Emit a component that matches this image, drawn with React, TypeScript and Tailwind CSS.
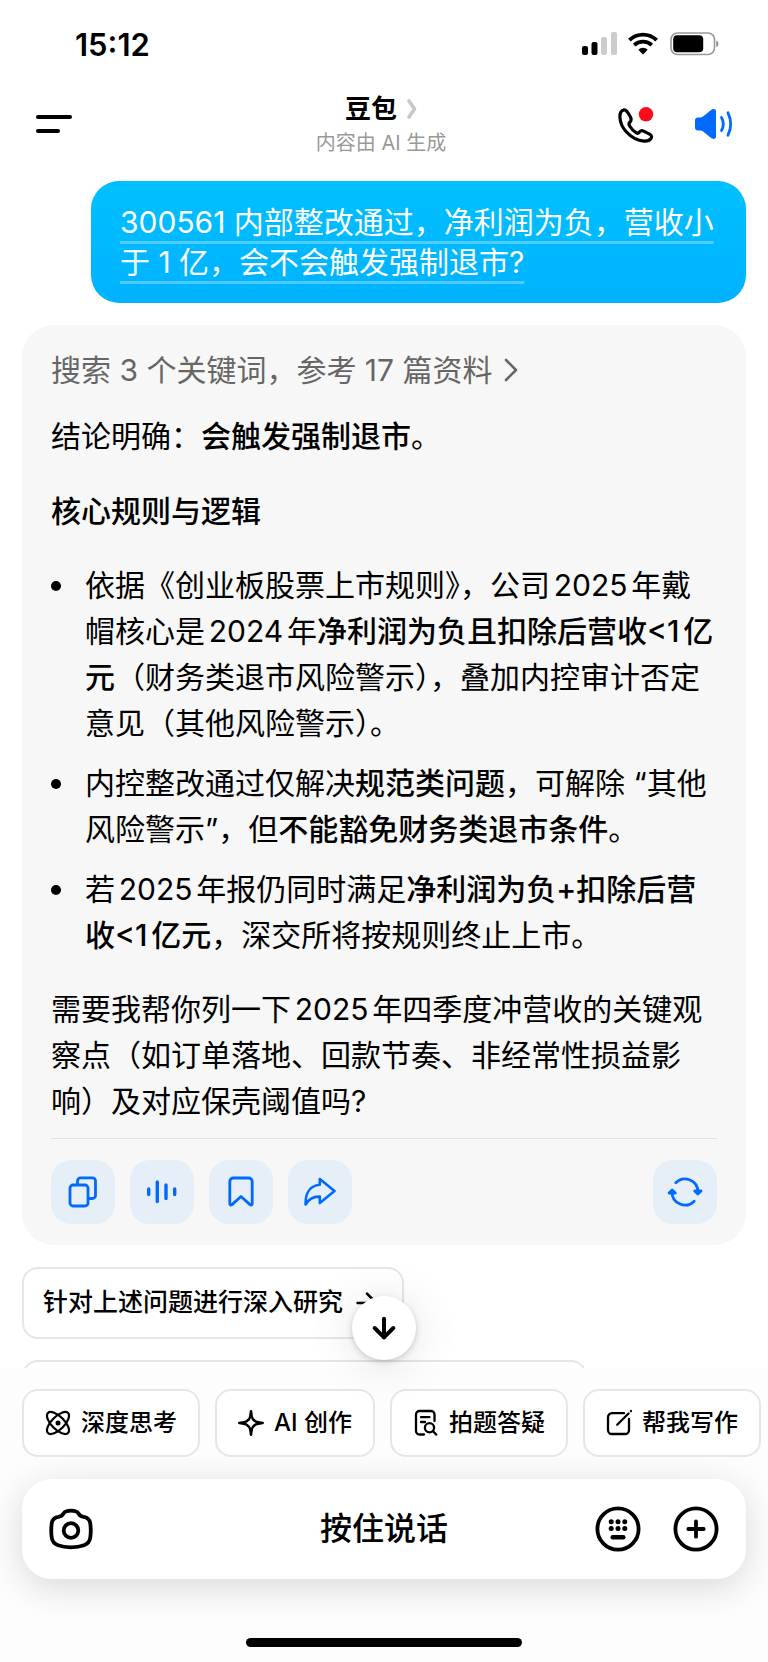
import React from "react";
import { ArrowDown, ArrowRight } from "lucide-react";

interface IconProps {
  className?: string;
}

const SignalIcon: React.FC<IconProps> = ({ className }) => (
  <svg viewBox="0 0 36 24" className={className} aria-hidden="true">
    <rect x="0" y="14" width="6" height="9" rx="2" />
    <rect x="9.5" y="10" width="6" height="13" rx="2" />
    <rect x="19" y="5" width="6" height="18" rx="2" fill="#ccc" />
    <rect x="29" y="0" width="6" height="23" rx="2" fill="#ccc" />
  </svg>
);

const WifiIcon: React.FC<IconProps> = ({ className }) => (
  <svg viewBox="0 0 30 24" className={className} aria-hidden="true">
    <g fill="none" stroke="currentColor" strokeWidth="3.8">
      <path d="M1.4 8.2 A19.5 19.5 0 0 1 28.6 8.2" />
      <path d="M6.2 13.2 A12.5 12.5 0 0 1 23.8 13.2" />
    </g>
    <path d="M15 22.6 L10.3 17.8 A6.7 6.7 0 0 1 19.7 17.8 Z" />
  </svg>
);

const BatteryIcon: React.FC<IconProps> = ({ className }) => (
  <svg viewBox="0 0 50 24" className={className} aria-hidden="true">
    <rect x="1" y="1" width="43.5" height="21.5" rx="6.5" fill="none" stroke="#999" strokeWidth="1.6" />
    <rect x="3.2" y="3.2" width="30" height="17" rx="4" />
    <path d="M46.3 8.5 C49 9.5 49 14 46.3 15 Z" fill="#888" />
  </svg>
);

const PhoneIcon: React.FC<IconProps> = ({ className }) => (
  <svg viewBox="0 0 38 38" className={className} fill="none" stroke="currentColor" strokeWidth="3.2" strokeLinejoin="round" aria-hidden="true">
    <path d="M4 13 C3.5 8 5.5 5 8 4.8 C10.5 4.6 11.5 7 14.2 11.5 C15.6 14 15.8 15.5 13.8 17.3 C12.6 18.4 12.8 19.6 13.6 21 C15.3 23.8 17.6 26.2 20.3 27.8 C21.5 28.5 22.4 28.4 23.1 27.4 C24.4 25.4 25.6 25.1 27.6 26.1 L33.6 29.2 C35.8 30.5 36 32 35 33.5 C33.5 35.5 31 36.3 28 36.1 C22 35.7 15 32 10 26.5 C6 22 4.3 17 4 13 Z" />
    <circle cx="30" cy="9.3" r="7.2" fill="#ff0a1a" stroke="none" />
  </svg>
);

const SpeakerIcon: React.FC<IconProps> = ({ className }) => (
  <svg viewBox="0 0 40 36" className={className} aria-hidden="true">
    <path fill="currentColor" d="M1 14.5 C1 12.5 2 11.6 4 11.5 L6.5 11.4 C8 11.3 9 10.7 10 9.8 L16.5 4.4 C19 2.4 22 2.6 22 5.5 V30.5 C22 33.4 19 33.6 16.5 31.6 L10 26.2 C9 25.3 8 24.7 6.5 24.6 L4 24.5 C2 24.4 1 23.5 1 21.5 Z" />
    <g fill="none" stroke="currentColor" strokeWidth="2.8" strokeLinecap="round">
      <path d="M27.5 11.5 Q31.2 18 27.5 24.5" />
      <path d="M34 6.8 Q39.4 18 34 29.2" />
    </g>
  </svg>
);

const CopyIcon: React.FC<IconProps> = ({ className }) => (
  <svg viewBox="0 0 32 32" className={className} fill="none" stroke="currentColor" strokeWidth="2.8" strokeLinejoin="round" aria-hidden="true">
    <rect x="3" y="9" width="18" height="21" rx="3" />
    <path d="M10.5 9 V4.8 a3 3 0 0 1 3-3 H25.5 a3 3 0 0 1 3 3 V19.5 a3 3 0 0 1-3 3 H21" />
  </svg>
);

const VoiceIcon: React.FC<IconProps> = ({ className }) => (
  <svg viewBox="0 0 32 32" className={className} fill="none" stroke="currentColor" strokeWidth="3.4" strokeLinecap="round" aria-hidden="true">
    <path d="M2.7 13 V18.5 M11.3 6 V25.5 M20 9 V22.5 M28.7 13 V18.5" />
  </svg>
);

const BookmarkIcon: React.FC<IconProps> = ({ className }) => (
  <svg viewBox="0 0 32 32" className={className} fill="none" stroke="currentColor" strokeWidth="2.8" strokeLinejoin="round" aria-hidden="true">
    <path d="M4.8 28 V5.5 a3.5 3.5 0 0 1 3.5-3.5 H23.7 a3.5 3.5 0 0 1 3.5 3.5 V28 q-.6 1.8-2.2.6 L16 20.5 L7 28.6 q-1.6 1.2-2.2-.6 Z" />
  </svg>
);

const ShareIcon: React.FC<IconProps> = ({ className }) => (
  <svg viewBox="0 0 32 32" className={className} fill="none" stroke="currentColor" strokeWidth="2.6" strokeLinejoin="round" aria-hidden="true">
    <path d="M15.8 8.8 V3 L30.5 15 L15.8 27 V20.6 C9.5 20.3 5 22.5 1.6 28.5 C1.2 17 6 9.6 15.8 8.8 Z" />
  </svg>
);

const RefreshIcon: React.FC<IconProps> = ({ className }) => (
  <svg viewBox="0 0 36 36" className={className} fill="none" stroke="currentColor" strokeWidth="2.8" strokeLinecap="round" strokeLinejoin="round" aria-hidden="true">
    <path d="M8.8 8.8 A13 13 0 0 1 31 18" />
    <path d="M27.7 17 L34 17 L30.9 20 Z" fill="currentColor" />
    <path d="M27.2 27.2 A13 13 0 0 1 5 18" />
    <path d="M2.1 19 L8.3 19 L5.2 16 Z" fill="currentColor" />
  </svg>
);

const AtomIcon: React.FC<IconProps> = ({ className }) => (
  <svg viewBox="0 0 26 26" className={className} fill="none" stroke="currentColor" strokeWidth="2.2" aria-hidden="true">
    <ellipse cx="13" cy="13" rx="14.2" ry="6.4" transform="rotate(45 13 13)" />
    <ellipse cx="13" cy="13" rx="14.2" ry="6.4" transform="rotate(-45 13 13)" />
    <circle cx="13" cy="13" r="2.5" fill="currentColor" stroke="none" />
  </svg>
);

const SparkleIcon: React.FC<IconProps> = ({ className }) => (
  <svg viewBox="0 0 26 26" className={className} fill="none" stroke="currentColor" strokeWidth="2.6" strokeLinejoin="round" aria-hidden="true">
    <path d="M13 1.3 C13.6 7.6 14.6 9.6 16 10 C16.6 11.4 18.4 12.4 24.7 13 C18.4 13.6 16.6 14.6 16 16 C14.6 16.4 13.6 18.4 13 24.7 C12.4 18.4 11.4 16.4 10 16 C9.4 14.6 7.6 13.6 1.3 13 C7.6 12.4 9.4 11.4 10 10 C11.4 9.6 12.4 7.6 13 1.3 Z" />
  </svg>
);

const DocSearchIcon: React.FC<IconProps> = ({ className }) => (
  <svg viewBox="0 0 26 26" className={className} fill="none" stroke="currentColor" strokeWidth="2.3" strokeLinecap="round" aria-hidden="true">
    <path d="M11 24.5 H6.5 a3.5 3.5 0 0 1-3.5-3.5 V4.5 a3.5 3.5 0 0 1 3.5-3.5 H18 a3.5 3.5 0 0 1 3.5 3.5 V11" />
    <path d="M8 7.2 H16.5 M8 12 H12" />
    <circle cx="16.5" cy="17.8" r="4.6" />
    <path d="M20 21.3 L23.3 24.6" />
  </svg>
);

const ComposeIcon: React.FC<IconProps> = ({ className }) => (
  <svg viewBox="0 0 26 26" className={className} fill="none" stroke="currentColor" strokeWidth="2.3" strokeLinecap="round" aria-hidden="true">
    <path d="M18 3.2 H6 a4 4 0 0 0-4 4 V20 a4 4 0 0 0 4 4 H19 a4 4 0 0 0 4-4 V9" />
    <path d="M11.2 14.8 L22.5 3.5" />
    <path d="M24.9 1.1 L25 1" />
  </svg>
);

const CameraIcon: React.FC<IconProps> = ({ className }) => (
  <svg viewBox="0 0 44 42" className={className} fill="none" stroke="currentColor" strokeWidth="3.8" strokeLinejoin="round" aria-hidden="true">
    <path d="M14.5 5.5 C16 3.2 18 2.7 22 2.7 C26 2.7 28 3.2 29.5 5.5 C31 8 32 8.5 34.5 8.8 C39 9.4 40.6 11.5 41.2 15 C41.9 19.5 41.9 25.5 41.2 30 C40.6 33.6 39 35.8 35 37.3 C31 38.8 27 39.3 22 39.3 C17 39.3 13 38.8 9 37.3 C5 35.8 3.4 33.6 2.8 30 C2.1 25.5 2.1 19.5 2.8 15 C3.4 11.5 5 9.4 9.5 8.8 C12 8.5 13 8 14.5 5.5 Z" />
    <circle cx="22" cy="22.5" r="7.3" />
  </svg>
);

const KeyboardIcon: React.FC<IconProps> = ({ className }) => (
  <svg viewBox="0 0 46 46" className={className} aria-hidden="true">
    <circle cx="23" cy="23" r="20.6" fill="none" stroke="currentColor" strokeWidth="3.8" />
    {[16.2, 23, 29.8].map((x) => (
      <g key={x}>
        <circle cx={x} cy="15.8" r="2.5" />
        <circle cx={x} cy="22.6" r="2.5" />
      </g>
    ))}
    <rect x="15.5" y="29" width="15" height="4.4" rx="2.2" />
  </svg>
);

const PlusIcon: React.FC<IconProps> = ({ className }) => (
  <svg viewBox="0 0 46 46" className={className} fill="none" stroke="currentColor" strokeWidth="3.8" strokeLinecap="round" aria-hidden="true">
    <circle cx="23" cy="23" r="20.6" />
    <path d="M23 15.3 V30.7 M15.3 23 H30.7" />
  </svg>
);

const actions = [
  { label: "复制", Icon: CopyIcon },
  { label: "朗读", Icon: VoiceIcon },
  { label: "收藏", Icon: BookmarkIcon },
  { label: "分享", Icon: ShareIcon },
];

const tools = [
  { label: "深度思考", Icon: AtomIcon },
  { label: "AI 创作", Icon: SparkleIcon },
  { label: "拍题答疑", Icon: DocSearchIcon },
  { label: "帮我写作", Icon: ComposeIcon },
];

const StatusBar: React.FC = () => (
  <div className="flex h-[88px] shrink-0 items-center justify-between pr-12 pl-[75px]">
    <span className="text-[31px] leading-none font-semibold">15:12</span>
    <div className="flex items-center">
      <SignalIcon className="h-6 w-9" />
      <WifiIcon className="ml-[10px] h-6 w-[30px]" />
      <BatteryIcon className="ml-3 h-6 w-[50px]" />
    </div>
  </div>
);

const Header: React.FC = () => (
  <header className="grid shrink-0 grid-cols-[1fr_auto_1fr] items-center pt-[3px] pr-[34px] pb-6 pl-9">
    <button type="button" aria-label="菜单" className="flex flex-col gap-[10px] justify-self-start">
      <span className="h-1 w-9 rounded-full bg-black" />
      <span className="h-1 w-6 rounded-full bg-black" />
    </button>
    <div className="flex flex-col items-center pr-2">
      <h1 className="flex items-center gap-[10px] text-[26px] leading-9 font-semibold">
        豆包
        <svg viewBox="0 0 10 20" className="h-5 w-[10px]" fill="none" stroke="#c8c8c8" strokeWidth="3.6" strokeLinecap="round" strokeLinejoin="round" aria-hidden="true">
          <path d="M2 2 L7.5 10 L2 18" />
        </svg>
      </h1>
      <p className="mt-[2px] text-[20px] leading-7 text-[#999]">内容由 AI 生成</p>
    </div>
    <div className="flex items-center gap-10 justify-self-end">
      <button type="button" aria-label="语音通话">
        <PhoneIcon className="size-[38px]" />
      </button>
      <button type="button" aria-label="播放声音" className="text-[#006aff]">
        <SpeakerIcon className="h-9 w-10" />
      </button>
    </div>
  </header>
);

const AnswerCard: React.FC = () => (
  <article className="mt-[22px] rounded-[32px] bg-[#f7f7f7] px-[29px] pt-[22px] pb-[21px] text-[30px] leading-[46px] [text-autospace:normal]">
    <a href="#sources" className="flex items-center gap-3 text-[#666]">
      搜索 3 个关键词，参考 17 篇资料
      <svg viewBox="0 0 14 24" className="h-6 w-[14px]" fill="none" stroke="currentColor" strokeWidth="2.6" strokeLinecap="round" strokeLinejoin="round" aria-hidden="true">
        <path d="M2 2 L12 12 L2 22" />
      </svg>
    </a>
    <p className="mt-5">
      结论明确：<strong className="font-medium">会触发强制退市</strong>。
    </p>
    <h2 className="mt-[29px] font-medium">核心规则与逻辑</h2>
    <ul className="mt-7 flex flex-col gap-[14px]">
      <Bullet>
        依据《创业板股票上市规则》，公司2025年戴帽核心是2024年
        <strong className="font-medium">净利润为负且扣除后营收&lt;1亿元</strong>
        （财务类退市风险警示），叠加内控审计否定意见（其他风险警示）。
      </Bullet>
      <Bullet>
        内控整改通过仅解决<strong className="font-medium">规范类问题</strong>，可解除 “其他风险警示”，但
        <strong className="font-medium">不能豁免财务类退市条件</strong>。
      </Bullet>
      <Bullet>
        若2025年报仍同时满足<strong className="font-medium">净利润为负+扣除后营收&lt;1亿元</strong>
        ，深交所将按规则终止上市。
      </Bullet>
    </ul>
    <p className="mt-7">
      需要我帮你列一下2025年四季度冲营收的关键观察点（如订单落地、回款节奏、非经常性损益影响）及对应保壳阈值吗?
    </p>
    <div className="mt-[14px] flex gap-[15px] border-t border-[#e2e2e2] pt-[21px]">
      {actions.map(({ label, Icon }) => (
        <button key={label} type="button" aria-label={label} className="flex size-16 items-center justify-center rounded-[20px] bg-[#e6eff8] text-[#006aff]">
          <Icon className="size-8" />
        </button>
      ))}
      <button type="button" aria-label="重新生成" className="ml-auto flex size-16 items-center justify-center rounded-[20px] bg-[#e6eff8] text-[#006aff]">
        <RefreshIcon className="size-9" />
      </button>
    </div>
  </article>
);

const Bullet: React.FC<{ children: React.ReactNode }> = ({ children }) => (
  <li className="flex gap-6">
    <span className="mt-[19px] size-[10px] shrink-0 rounded-full bg-black" />
    <p>{children}</p>
  </li>
);

export default function App() {
  return (
    <div className="flex h-screen flex-col overflow-hidden bg-white font-[Inter,'Noto_Sans_CJK_SC',sans-serif] text-black">
      <StatusBar />
      <Header />

      <main className="min-h-0 flex-1 overflow-hidden px-[22px]">
        <div className="ml-[69px] rounded-[28px] bg-linear-to-b from-[#00c0ff] to-[#00b2ff] px-[29px] py-[21px]">
          <p className="text-[30px] leading-10 text-white underline decoration-white/30 decoration-3 underline-offset-8">
            300561 内部整改通过，净利润为负，营收小于 1 亿，会不会触发强制退市?
          </p>
        </div>

        <AnswerCard />

        <div className="mt-[22px] flex flex-col items-start gap-[21px]">
          <button type="button" className="flex h-[72px] items-center gap-2 rounded-2xl border-2 border-[#e6e6e6] px-[19px] text-[25px] font-medium">
            针对上述问题进行深入研究
            <ArrowRight className="size-8" />
          </button>
          <button type="button" aria-label="更多追问" className="h-[72px] w-[78%] rounded-2xl border-2 border-[#e6e6e6]" />
        </div>
      </main>

      <footer className="relative shrink-0 bg-[#fdfdfd] pt-[21px] pb-[15px]">
        <button
          type="button"
          aria-label="回到底部"
          className="absolute bottom-full left-1/2 mb-2 flex size-16 -translate-x-1/2 items-center justify-center rounded-full bg-white shadow-[0_2px_6px_rgba(0,0,0,0.18),0_4px_48px_rgba(0,0,0,0.12)]"
        >
          <ArrowDown className="size-8" strokeWidth={3} />
        </button>

        <div className="flex gap-[15px] px-[22px]">
          {tools.map(({ label, Icon }) => (
            <button key={label} type="button" className="flex h-[68px] shrink-0 items-center gap-[10px] rounded-2xl border-2 border-[#e6e6e6] bg-white px-[21px] text-[24px] font-medium">
              <Icon className="size-[26px] overflow-visible" />
              {label}
            </button>
          ))}
        </div>

        <div className="mx-[22px] mt-[22px] grid h-[100px] grid-cols-[1fr_auto_1fr] items-center rounded-[30px] bg-white px-[27px] shadow-[0_8px_36px_rgba(0,0,0,0.15)]">
          <button type="button" aria-label="拍照" className="justify-self-start">
            <CameraIcon className="h-[42px] w-11" />
          </button>
          <button type="button" className="text-[32px] font-medium">
            按住说话
          </button>
          <div className="flex gap-8 justify-self-end">
            <button type="button" aria-label="键盘输入">
              <KeyboardIcon className="size-[46px]" />
            </button>
            <button type="button" aria-label="更多">
              <PlusIcon className="size-[46px]" />
            </button>
          </div>
        </div>

        <div className="mx-auto mt-[59px] h-[9px] w-[36%] rounded-full bg-black" />
      </footer>
    </div>
  );
}
